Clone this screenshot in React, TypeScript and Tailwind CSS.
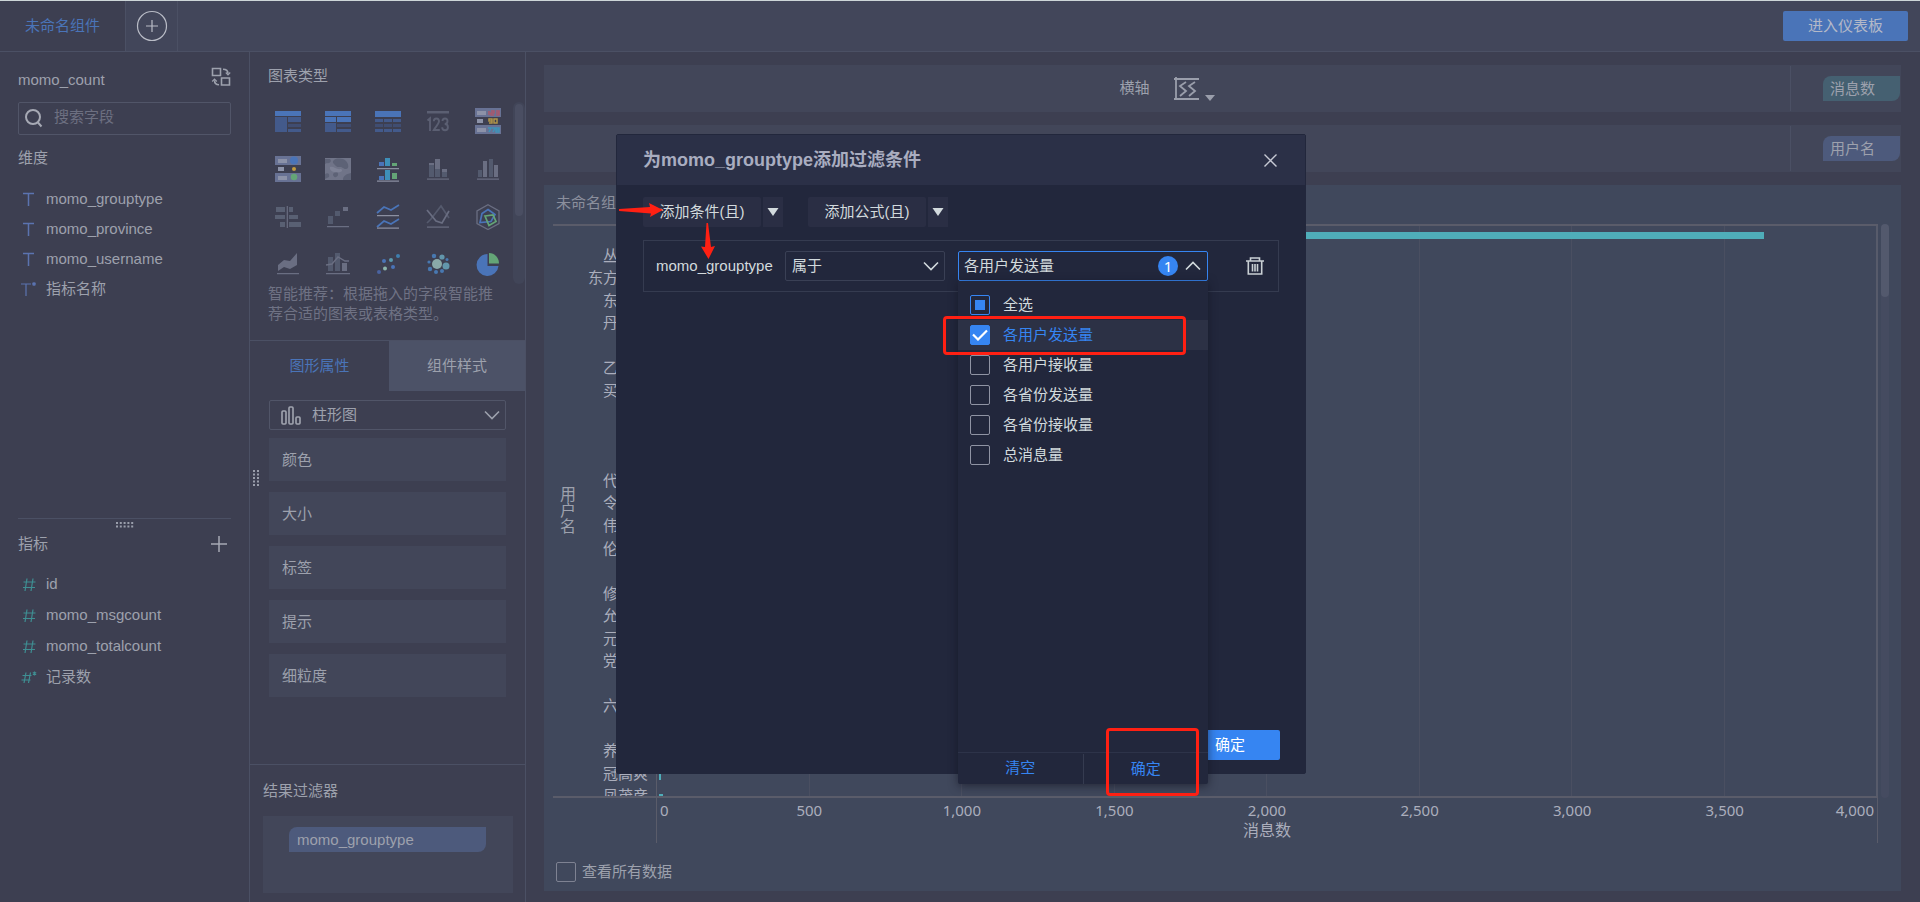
import React from "react";

type Kids = { children: React.ReactNode };

const dims = ["momo_grouptype", "momo_province", "momo_username", "指标名称"];
const metrics = ["id", "momo_msgcount", "momo_totalcount", "记录数"];
const props = ["颜色", "大小", "标签", "提示", "细粒度"];
const options = ["各用户发送量", "各用户接收量", "各省份发送量", "各省份接收量", "总消息量"];
const rows = [
  "丛", "东方", "东", "丹", "", "乙", "买", "", "", "", "代", "令", "伟", "伦", "",
  "修", "允", "元", "党", "", "六", "", "养", "冠高爽", "凤茂彦",
];

const B = "#4a74b8";
const D = "#435a8b";
const D2 = "#404d71";
const G = "#6a6e82";
const G2 = "#535a6e";

function Ico({ children }: Kids) {
  return (
    <svg width="26" height="26" viewBox="0 0 26 26" fill="none">
      {children}
    </svg>
  );
}

const chartIcons: { name: string; art: React.ReactNode }[] = [
  { name: "分组表", art: <><path fill={B} d="M0 3h26v5H0z" /><path fill={D} d="M0 9h12v15H0zM13 9h13v5H13zM13 21h13v3H13z" /><path fill={D2} d="M13 16h13v3H13z" /></> },
  { name: "交叉表", art: <><path fill={B} d="M0 3h26v5H0zM0 9h11v5H0zM12 9h14v5H12z" /><path fill={D} d="M0 15h11v9H0zM12 21h14v3H12z" /><path fill={D2} d="M12 16h14v3H12z" /></> },
  { name: "明细表", art: <><path fill={B} d="M0 3h26v6H0z" /><path fill={D} d="M0 11h8v3H0zM9 11h8v3H9zM18 11h8v3h-8zM0 21h8v3H0zM9 21h8v3H9zM18 21h8v3h-8z" /><path fill={D2} d="M0 16h8v3H0zM9 16h8v3H9zM18 16h8v3h-8z" /></> },
  { name: "指标卡", art: <><path fill="#5b5f72" d="M2 3h22v2.500H2z" /><path stroke="#5b5f72" strokeWidth="1.900" d="M2.500 12.500 5 10.300V23M8.800 13.300c0-3.800 5.200-3.800 5.200 0 0 2.400-3 5-5.200 8.700H14.800M17.500 13c0-3.400 5-3.400 5 0 0 2-1 3-2.800 3 1.800 0 3.200 1 3.200 3.200 0 4-5.700 4-5.700 0" /></> },
  { name: "颜色表格", art: <><path fill="#687294" d="M0 0h26v9H0zM0 17h26v9H0z" /><path fill="#8c92a8" d="M2 3h9v4H2zM2 11h6v4H2zM2 20h9v4H2z" /><path stroke="#a8586c" strokeWidth="1.500" d="M14 3v4M16 3h3v2h-3v2h3M21 3h3v4h-3M21 5h3" /><path stroke="#b0954a" strokeWidth="1.500" d="M17 13h-3v-2h3v4h-3M19 11h3v4h-3z" /><path stroke="#3f93b8" strokeWidth="1.500" d="M13 20h3l-2 4M17 20h3l-2 4M21 20h3v4h-3zM21 22h3" /></> },
  { name: "状态表格", art: <><path fill="#687294" d="M0 0h26v9H0zM0 17h26v9H0z" /><path fill="#8c92a8" d="M3 3h9v4H3zM3 11h6v4H3zM3 20h9v4H3z" /><circle cx="19" cy="4.500" r="4" fill={B} /><circle cx="19" cy="13" r="2" fill="#c09a3e" /><circle cx="19" cy="21" r="3.300" fill="#64a577" /></> },
  { name: "热力图", art: <><path fill="#707488" d="M0 2h26v22H0z" /><path fill="#5d6276" d="M9 4c3-2 9-2 12 1s3 8 0 8-3-2-6-2-3 0-5-2-3-3-1-5zM0 3h5c2 2 0 5-3 4L0 8zM0 18c3-2 5 0 4 3l-4 2zM18 24c0-4 3-6 8-7v7zM8 18c2-3 6-2 5 1s-5 3-5-1z" /><path fill="#7e8296" d="M5 11c4-1 6 3 11 2 3 2-1 4-4 3-4 1-8-2-7-5z" /></> },
  { name: "分区柱形图", art: <><path fill={B} d="M4 6h5v4H4zM4 20h5v4H4z" /><path fill="#3e8fb8" d="M10 2h5v8h-5zM10 14h5v10h-5z" /><path fill="#64a577" d="M17 7h5v3h-5zM17 17h5v6h-5z" /><path fill="#8b8fa1" d="M2 12h22v1.200H2zM2 24.500h22v1.200H2z" /></> },
  { name: "堆积柱形图", art: <><path fill={G} d="M4 7h5v2H4zM10 3h5v10h-5zM17 13h5v3h-5z" /><path fill={G2} d="M4 9h5v12H4zM10 13h5v8h-5zM17 16h5v5h-5z" /><path fill={G} d="M2 22.500h22v1.200H2z" /></> },
  { name: "多系列柱形图", art: <><path fill={G2} d="M3 14h4v7H3zM14 3h4v18h-4z" /><path fill={G} d="M8 5h4v16H8zM19 9h4v12h-4zM2 22.500h22v1.200H2z" /></> },
  { name: "对比条形图", art: <><path fill="#596073" d="M1 3h9v5H1zM0 11h10v4H0zM5 18h5v5H5zM14 3h4v5h-4zM14 11h9v4h-9zM14 18h12v5H14z" /><path fill={G} d="M11.700 2h1.200v22h-1.200z" /></> },
  { name: "瀑布图", art: <><path fill={G2} d="M3 12h5v8H3zM10 7h5v5h-5z" /><path fill={G} d="M18 3h5v4h-5zM2 22h22v1.200H2z" /></> },
  { name: "分区折线图", art: <><path stroke={B} strokeWidth="1.700" d="m2 9 7-6 7 3 8-5M2 23l7-6 7 3 8-5" /><path fill="#8b8fa1" d="M2 11h22v1.200H2zM2 23.500h22v1.200H2z" /></> },
  { name: "折线图", art: <><path stroke="#555a6d" strokeWidth="1.700" d="m2 19 4-4 10-13 8 12" /><path stroke={G} strokeWidth="1.700" d="m2 6 9 11 6 2 7-12" /><path fill={G} d="M2 22.500h22v1.200H2z" /></> },
  { name: "雷达图", art: <><path stroke={G} strokeWidth="1.300" d="m13 .8 11 6.200v12.500L13 25.500 2 19.500V7z" /><path stroke={B} strokeWidth="1.700" d="m13 5.500 7 5-4 7-11 1 2-9z" /><path stroke="#64a577" strokeWidth="1.700" d="m10 12 8-1 3 6.500-7 4z" /></> },
  { name: "面积图", art: <><path fill={G} d="m3 13 6-5 6 1 7-8v12l-7 4-6-2-6 4zM2 21h22v1.200H2z" /></> },
  { name: "组合图", art: <><path fill={G2} d="M3 5h5v14H3zM10 1h5v18h-5z" /><path fill={G} d="M17 11h5v8h-5zM1 21h24v1.200H1z" /><path stroke={G} strokeWidth="1.400" d="m1 13 6-1 6-7 7 4h4" /></> },
  { name: "散点图", art: <><g fill={B}><circle cx="4" cy="20" r="2" fill="#4a63a0" /><circle cx="9" cy="9" r="2" /><circle cx="18" cy="15" r="2" /><circle cx="23" cy="4" r="2" fill="#3e7fae" /><circle cx="10" cy="16.500" r="2" fill="#8db5ac" /><circle cx="16" cy="8" r="2" fill="#5a9aae" /></g></> },
  { name: "聚合气泡图", art: <><circle cx="12" cy="12" r="5" fill="#8aa9a8" /><g fill="#4878b0"><circle cx="9" cy="4" r="2.200" /><circle cx="4" cy="10" r="1.600" /><circle cx="5" cy="17" r="2.200" /><circle cx="11" cy="20" r="2" /><circle cx="17" cy="19" r="2" /><circle cx="22" cy="7.500" r="1.500" /></g><circle cx="17" cy="5" r="2.600" fill="#6296ac" /><circle cx="21" cy="14" r="3.500" fill="#6296ac" /></> },
  { name: "饼图", art: <><path fill={B} d="M12.500 2v12h11A11 11 0 1 1 12.500 2z" /><path fill="#64a577" d="M14 1c6 0 10 5 10 10.500H14z" /></> },
];

function Chevron({ up }: { up?: boolean }) {
  return (
    <svg width="16" height="10" viewBox="0 0 16 10" fill="none" stroke="currentColor" strokeWidth="1.600" className="pointer-events-none shrink-0">
      <path d={up ? "m1 8.500 7-7 7 7" : "m1 1.500 7 7 7-7"} />
    </svg>
  );
}

function SplitButton({ label }: { label: string }) {
  return (
    <div className="flex gap-0.5">
      <button className="h-[30px] w-[118px] rounded-xs bg-[#2a2e44] text-[#d2dadd]">{label}</button>
      <button aria-label={label + " 更多"} className="flex h-[30px] w-5 items-center justify-center bg-[#2a2e44]">
        <svg width="12" height="8" viewBox="0 0 12 8"><path fill="#d2dadd" d="M.5 0h11L6 8z" /></svg>
      </button>
    </div>
  );
}

function Shelf({ children, tag, tone }: Kids & { tag: string; tone: string }) {
  return (
    <div className="flex h-[47px] bg-[#424659]">
      <div className="flex flex-1 items-center justify-center gap-6">{children}</div>
      <div className="my-px flex w-[111px] items-center justify-end border-l border-[#4b5064] pr-px">
        <span className={"h-[25px] w-[77px] rounded-tl-lg rounded-br-lg pl-[7px] leading-[25px] " + tone}>{tag}</span>
      </div>
    </div>
  );
}

function FieldSidebar() {
  return (
    <aside className="flex w-[250px] shrink-0 flex-col border-r border-[#4b5064] px-[18px]">
      <div className="mt-[14px] flex h-7 items-center justify-between">
        <span>momo_count</span>
        <button aria-label="切换数据表" className="mb-1.5">
          <svg width="20" height="20" viewBox="0 0 20 20" fill="none" stroke="#9da1ad" strokeWidth="1.600">
            <path d="M1.500 1.500h8v7h-8zM10.500 11h8v7h-8zM12 2.200c3 0 5 1.300 5 4.500M8 17.800c-3 0-4.500-1.300-4.500-4.500" />
            <path d="m14.800 5.500 2.200 2.300 2.200-2.300M1.200 14.500l2.300-2.300 2.300 2.300" strokeWidth="1.200" />
          </svg>
        </button>
      </div>
      <label className="mt-2 flex h-[33px] items-center gap-[11px] rounded-xs border border-[#515568] pl-1.5">
        <svg width="18" height="19" viewBox="0 0 18 19" fill="none" stroke="#a6a9b4" strokeWidth="2" className="shrink-0"><circle cx="8" cy="8" r="7" /><path d="m12.500 13 4 4.500" /></svg>
        <input aria-label="搜索字段" placeholder="搜索字段" className="w-full bg-transparent pb-0.5 outline-none placeholder:text-[#6d7081]" />
      </label>
      <h2 className="mt-[13px] h-5 leading-5">维度</h2>
      <ul className="mt-4">
        {dims.map((d, i) => (
          <li key={d} className="flex h-[30px] items-center">
            <svg width="28" height="16" viewBox="0 0 28 16" fill="none" stroke="#5b73b0" strokeWidth="1.500">
              {i < 3 ? <path d="M5 2.500h11M10.500 2.500V15" /> : <path d="M3 3h10M8 3v12M16 1v4M14.300 2l3.400 2M14.300 4l3.400-2" strokeWidth="1.200" />}
            </svg>
            {d}
          </li>
        ))}
      </ul>
      <div className="mt-[214px] h-2.5 border-t border-[#4b5064]">
        <svg width="18" height="6" viewBox="0 0 18 6" className="mx-auto mt-[3px] block"><path stroke="#9a9eab" strokeWidth="2" strokeDasharray="2 1.800" d="M0 1h18M0 4.500h18" /></svg>
      </div>
      <div className="mt-1 flex h-6 items-center justify-between">
        <h2>指标</h2>
        <button aria-label="添加指标" className="mr-1">
          <svg width="16" height="16" viewBox="0 0 16 16" stroke="#a6a9b4" strokeWidth="1.500"><path d="M8 0v16M0 8h16" /></svg>
        </button>
      </div>
      <ul className="mt-[13px]">
        {metrics.map((d, i) => (
          <li key={d} className="flex h-[31px] items-center">
            <svg width="28" height="16" viewBox="0 0 28 16" fill="none" stroke="#3f8f93" strokeWidth="1.200">
              {i < 3 ? <path d="M9 1.500 7 14M15 1.500 13 14M5.500 5h12M5 10.500h12" /> : <path d="M8 2.500 6 13M12.500 2.500l-2 10.500M4.500 5.500h9M3.500 10h9M16.500 1.500v4M14.800 2.500l3.400 2M14.800 4.500l3.400-2" />}
            </svg>
            {d}
          </li>
        ))}
      </ul>
    </aside>
  );
}

function ChartSidebar() {
  return (
    <aside className="relative flex w-[276px] shrink-0 flex-col border-r border-[#4b5064]">
      <h2 className="mt-3.5 ml-[18px] h-5 leading-5">图表类型</h2>
      <div className="mt-4 flex h-[182px] justify-between">
        <div className="ml-[13px] grid auto-rows-[48px] grid-cols-[repeat(5,50px)] content-start">
          {chartIcons.map((c) => (
            <button key={c.name} aria-label={c.name} className="flex items-start justify-center pt-1.5">
              <Ico>{c.art}</Ico>
            </button>
          ))}
        </div>
        <div className="h-full w-3 rounded-md bg-[#414558] p-0.5"><div className="h-28 rounded-full bg-[#4a4e62]" /></div>
      </div>
      <p className="mr-5 ml-[18px] leading-5 text-[#6f7284]">智能推荐：根据拖入的字段智能推荐合适的图表或表格类型。</p>
      <div className="mt-4 flex h-[51px] border-t border-[#4b5064]" role="tablist">
        <button role="tab" aria-selected="true" className="w-[139px] text-[#4a74b8]">图形属性</button>
        <button role="tab" aria-selected="false" className="flex-1 bg-[#4c5267]">组件样式</button>
      </div>
      <div className="mt-[9px] mr-[19px] ml-[19px] flex flex-col">
        <label className="relative flex h-[30px] items-center">
          <svg width="20" height="19" viewBox="0 0 20 19" fill="none" stroke="#a1a5b0" strokeWidth="1.600" className="absolute left-3"><rect x="1" y="5" width="4" height="13" rx="1" /><rect x="8" y="1" width="4" height="17" rx="1" /><rect x="15" y="11" width="4" height="7" rx="1" /></svg>
          <select aria-label="图形" className="h-full w-full appearance-none rounded-xs border border-[#515568] bg-transparent pl-[42px] outline-none"><option>柱形图</option></select>
          <span className="absolute right-1.5"><Chevron /></span>
        </label>
        <div className="mt-2 flex flex-col gap-[11px]">
          {props.map((p) => (
            <div key={p} className="h-[43px] bg-[#424659] pl-[13px] leading-[43px]">{p}</div>
          ))}
        </div>
      </div>
      <div className="mt-[67px] border-t border-[#4b5064] pr-3 pl-[13px]">
        <h2 className="mt-4 h-5 leading-5">结果过滤器</h2>
        <div className="mt-[15px] h-[77px] bg-[#424659] pt-[11px] pl-[26px]">
          <div className="h-[25px] w-[197px] rounded-tl-lg rounded-br-lg bg-[#4d5a7c] pl-2 leading-[25px]">momo_grouptype</div>
        </div>
      </div>
      <svg width="7" height="16" viewBox="0 0 7 16" className="absolute top-[418px] left-[3px]"><path stroke="#9a9eab" strokeWidth="2" strokeDasharray="2 1.500" d="M1 0v16M5 0v16" /></svg>
    </aside>
  );
}

function ChartPanel() {
  return (
    <section className="mt-[13px] flex flex-1 flex-col bg-[#40485c] pr-3">
      <h2 className="mt-2 ml-3 h-[23px] leading-5 text-[#8b8f9d]">未命名组件</h2>
      <div className="mt-2 ml-[9px] flex h-[574px]">
        <div className="relative flex flex-1 border-y-2 border-[#5a5c6a]">
          <div className="flex w-[30px] items-center justify-center"><span className="w-4 text-base leading-4">用户名</span></div>
          <div className="w-[73px] overflow-hidden pt-[18px]">
            <div className="grid h-[563px] auto-rows-fr">
              {rows.map((r, i) => (
                <div key={i} className="flex items-center justify-end pr-2 leading-none text-[#abaebc]">
                  <span className={r === "东方" ? "w-[60px]" : "w-[45px]"}>{r}</span>
                </div>
              ))}
            </div>
          </div>
          <div className="relative flex flex-1 border-l border-[#5a5c6a]">
            {[1, 2, 3, 4, 5, 6, 7, 8].map((n) => (
              <div key={n} className={n === 8 ? "flex-1 border-r-2 border-[#575b6b]" : "flex-1 border-r border-[#4a4f61]"} />
            ))}
            <div className="absolute top-1.5 left-0 h-[7px] w-[90.7%] bg-[#4fadb9]" />
            <div className="absolute bottom-[16px] left-0.5 h-2 w-0.5 bg-[#4fadb9]" />
            <div className="absolute bottom-0 left-0.5 h-0.5 w-1 bg-[#4fadb9]" />
          </div>
        </div>
        <div className="ml-[3px] w-2 rounded-full bg-[#454b60]"><div className="h-[73px] rounded-full bg-[#53596d]" /></div>
      </div>
      <div className="mr-[11px] ml-[112px] flex h-[45px] flex-col border-x border-[#5a5c6a]">
        <div className="flex justify-between px-[3px] font-['Noto_Sans',sans-serif] leading-6 text-[#abaebc]">
          <span className="w-[9px]">0</span>
          <div className="-mx-3 grid flex-1 grid-cols-7 px-[76px] text-center">
            {["500", "1,000", "1,500", "2,000", "2,500", "3,000", "3,500"].map((t) => <span key={t}>{t}</span>)}
          </div>
          <span className="w-[9px]"><span className="float-right">4,000</span></span>
        </div>
        <div className="mt-px text-center text-base leading-4 text-[#abaebc]">消息数</div>
      </div>
      <label className="mt-[19px] ml-3 flex h-5 items-center gap-1.5">
        <input type="checkbox" className="size-5 appearance-none rounded-xs border border-[#7e8292]" />
        查看所有数据
      </label>
    </section>
  );
}

function OptionRow({ label, state }: { label: string; state: "on" | "part" | "off" }) {
  return (
    <li className={state === "on" ? "bg-[#2c3145] text-[#3685f2]" : ""}>
      <label className="flex h-[30px] items-center gap-[13px] pl-3">
        <span className="relative flex size-5 items-center justify-center">
          <input
            type="checkbox"
            defaultChecked={state === "on"}
            className={"absolute inset-0 appearance-none rounded-xs border " + (state === "on" ? "border-[#3685f2] bg-[#3685f2]" : state === "part" ? "border-[#3685f2]" : "border-[#8f93a3]")}
          />
          {state === "on" && <svg width="16" height="12" viewBox="0 0 16 12" fill="none" stroke="#fff" strokeWidth="2.200" className="relative"><path d="m1 5.500 5 5L15 1.500" /></svg>}
          {state === "part" && <span className="relative size-2.5 bg-[#3685f2]" />}
        </span>
        {label}
      </label>
    </li>
  );
}

function FilterDialog() {
  return (
    <div role="dialog" aria-label="为momo_grouptype添加过滤条件" className="absolute top-[133px] left-1/2 flex h-[640px] w-[690px] -translate-x-[344px] flex-col rounded-xs border border-[#22273c] bg-[#22273c] text-[#d2dadd]">
      <header className="flex h-[50px] items-center justify-between bg-[#2b3047] pr-7 pl-[26px]">
        <h1 className="text-lg font-bold text-[#a9adc0]">为momo_grouptype添加过滤条件</h1>
        <button aria-label="关闭"><svg width="13" height="13" viewBox="0 0 13 13" stroke="#c6c9d4" strokeWidth="1.400"><path d="m.5.500 12 12M12.500.500l-12 12" /></svg></button>
      </header>
      <div className="mt-3 flex gap-[25px] pl-[26px]">
        <SplitButton label="添加条件(且)" />
        <SplitButton label="添加公式(且)" />
      </div>
      <div className="mt-[13px] mr-[26px] ml-[26px] flex h-[52px] items-center border border-[#353b50] pl-3">
        <span className="w-[129px]">momo_grouptype</span>
        <label className="relative flex h-[30px] w-40 items-center">
          <select aria-label="条件" className="h-full w-full appearance-none rounded-xs border border-[#3a4055] bg-transparent pl-1.5 outline-none"><option>属于</option></select>
          <span className="absolute right-1.5"><Chevron /></span>
        </label>
        <div className="relative ml-[13px] w-[250px]">
          <button aria-expanded="true" className="flex h-[30px] w-full items-center rounded-xs border border-[#3685f2] pr-1.5 pl-[5px]">
            <span className="flex-1 text-left">各用户发送量</span>
            <span className="mr-[7px] size-5 rounded-full bg-[#3685f2] font-['Noto_Sans',sans-serif] leading-5 text-white">1</span>
            <Chevron up />
          </button>
          <div className="absolute top-full left-0 z-10 flex h-[503px] w-full flex-col rounded-b-xs bg-[#22273c] pt-[9px] shadow-[0_2px_10px_rgba(16,19,32,0.6)]">
            <ul className="flex-1">
              <OptionRow label="全选" state="part" />
              {options.map((o, i) => <OptionRow key={o} label={o} state={i === 0 ? "on" : "off"} />)}
            </ul>
            <div className="flex h-8 border-t border-[#2d3349] text-[#3685f2]">
              <button className="flex-1">清空</button>
              <button className="mt-px flex-1 border-l border-[#353b50]">确定</button>
            </div>
          </div>
        </div>
        <button aria-label="删除" className="ml-[38px]">
          <svg width="18" height="18" viewBox="0 0 18 18" fill="none" stroke="#c9d0d4" strokeWidth="1.600"><path d="M0 4h18M4.500 3.500V1h9v2.500M2.300 4v13h13.400V4M6.500 7v7.500M9 7v7.500M11.500 7v7.500" /></svg>
        </button>
      </div>
      <div className="mt-auto mr-[25px] mb-[13px] flex justify-end">
        <button className="h-[30px] w-[100px] rounded-xs bg-[#3685f2] text-white">确定</button>
      </div>
      <div className="pointer-events-none absolute top-[181px] left-[326px] z-20 h-[39px] w-[243px] rounded-sm border-[3px] border-[#ff2013]" />
      <div className="pointer-events-none absolute top-[593px] left-[489px] z-20 h-[68px] w-[93px] rounded-sm border-[3px] border-[#ff2013]" />
      <svg width="44" height="14" viewBox="0 0 44 14" className="pointer-events-none absolute top-[68px] left-0.5 z-20"><path fill="#ff2013" d="M0 6 31 4 30 0l14 7-13 7 1-3.500L0 8z" /></svg>
      <svg width="14" height="36" viewBox="0 0 14 36" className="pointer-events-none absolute top-[88px] left-[84px] z-20"><path fill="#ff2013" d="M7 0 10 24l4-1-6.500 13L0 23.500l4 .5L5.500 0z" /></svg>
    </div>
  );
}

export default function App() {
  return (
    <div className="relative flex min-h-screen flex-col border-t border-[#cdd6d8] bg-[#3d3f51] font-['Liberation_Sans','Noto_Sans_CJK_SC',sans-serif] text-[15px] text-[#9da1ad]">
      <header className="flex h-[51px] shrink-0 items-center border-b border-[#4b5064] bg-[#42465a]">
        <div className="flex h-full w-[126px] items-center justify-center border-r border-[#4b5064] bg-[#3d3f51] text-[#4a74b8]">
          未命名组件
        </div>
        <button aria-label="新建组件" className="flex h-full w-[52px] items-center justify-center border-r border-[#4b5064]">
          <svg width="32" height="32" viewBox="0 0 32 32" fill="none" stroke="#b9bcc6" strokeWidth="1.200"><circle cx="16" cy="16" r="14.500" /><path d="M16 10v12M10 16h12" /></svg>
        </button>
        <a href="#dashboard" className="mr-3 ml-auto h-[30px] w-[125px] rounded-xs bg-[#4a74b8] text-center leading-[30px] text-[#b4b9c8]">进入仪表板</a>
      </header>
      <div className="flex flex-1">
        <FieldSidebar />
        <ChartSidebar />
        <main className="flex min-w-0 flex-1 flex-col pt-[13px] pr-[19px] pb-[11px] pl-[18px]">
          <Shelf tag="消息数" tone="bg-[#456071]">
            <span>横轴</span>
            <button aria-label="坐标轴选项" className="flex items-end gap-1.5">
              <svg width="25" height="24" viewBox="0 0 25 24" fill="none" stroke="#9a9eab" strokeWidth="1.800"><path d="M0 2h25M2 0v23M0 22h25M12 5 6 9l6 5-6 5M21 5l-6 4 6 5-6 5" /></svg>
              <svg width="10" height="6" viewBox="0 0 10 6"><path fill="#9a9eab" d="M0 0h10L5 6z" /></svg>
            </button>
          </Shelf>
          <div className="mt-[13px]"><Shelf tag="用户名" tone="bg-[#4d5a7c]">{null}</Shelf></div>
          <ChartPanel />
        </main>
      </div>
      <FilterDialog />
    </div>
  );
}
